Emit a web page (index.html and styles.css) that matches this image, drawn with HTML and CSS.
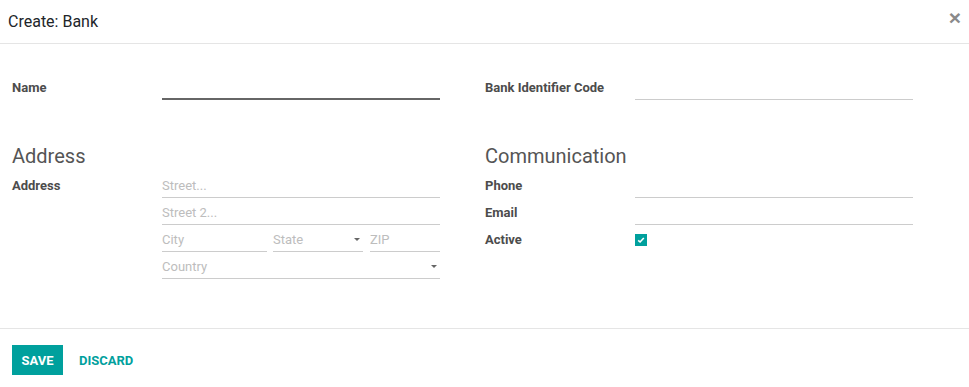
FILE: index.html
```html
<!DOCTYPE html>
<html lang="en">
<head>
    <title>Create: Bank</title>
    <meta name="viewport" content="width=device-width, initial-scale=1.0">
    <link rel="stylesheet" href="styles.css">
</head>
<body>

    <!-- Header -->
    <div class="modal-header">
        <h4 class="modal-title">Create: Bank</h4>
        <button class="close-btn">&times;</button>
    </div>

    <div class="modal-body">
        <div class="form-row top-row">
            <div class="group">
                <label class="field-label">Name</label>
                <input class="field-input name-input" type="text">
            </div>
            <div class="group">
                <label class="field-label">Bank Identifier Code</label>
                <input class="field-input" type="text">
            </div>
        </div>

        <div class="form-row">
            <div class="group">
                <h3 class="group-title">Address</h3>
                <label class="field-label">Address</label>
                <div class="address-fields">
                    <input class="field-input" type="text" placeholder="Street...">
                    <input class="field-input" type="text" placeholder="Street 2...">
                    <div class="address-line">
                        <input class="field-input city" type="text" placeholder="City">
                        <div class="select-input state">State<span class="caret"></span></div>
                        <input class="field-input zip" type="text" placeholder="ZIP">
                    </div>
                    <div class="select-input">Country<span class="caret"></span></div>
                </div>
            </div>
            <div class="group">
                <h3 class="group-title">Communication</h3>
                <label class="field-label">Phone</label>
                <input class="field-input" type="text">
                <label class="field-label">Email</label>
                <input class="field-input" type="text">
                <label class="field-label">Active</label>
                <div class="check-cell">
                    <span class="checkbox">
                        <svg width="8" height="8" viewBox="0 0 8 8"><path d="M1.2 4.3 L3.1 6 L6.8 2" fill="none" stroke="#fff" stroke-width="1.6"/></svg>
                    </span>
                </div>
            </div>
        </div>
    </div>

    <div class="modal-footer">
        <button class="btn-save">Save</button>
        <button class="btn-discard">Discard</button>
    </div>

</body>
</html>
```

FILE: styles.css
```css
body {
    margin: 0;
    background: #fff;
    color: #4c4c4c;
    font-family: Roboto, 'Noto Sans', sans-serif;
    font-size: 13px;
}

/* Header */
.modal-header {
    height: 43px;
    border-bottom: 1px solid #e5e5e5;
    display: flex;
    align-items: center;
    justify-content: space-between;
    padding: 0 8px;
}

.modal-title {
    margin: 0;
    font-size: 16px;
    font-weight: 400;
    color: #212529;
}

.close-btn {
    border: none;
    background: none;
    padding: 0;
    margin-top: -8px;
    font-size: 21px;
    font-weight: bold;
    line-height: 1;
    color: #8a8a8a;
    cursor: pointer;
}

/* Body */
.modal-body {
    padding: 32px 0 49px 12px;
}

.form-row {
    display: flex;
    gap: 45px;
}

.top-row {
    margin-bottom: 43px;
}

.group {
    width: 428px;
    display: grid;
    grid-template-columns: 150px 278px;
    align-content: start;
}

.group-title {
    grid-column: 1 / -1;
    margin: 0 0 2px;
    font-size: 20px;
    line-height: 26px;
    font-weight: 400;
    color: #555;
}

.field-label {
    font-weight: bold;
    line-height: 25px;
    padding-top: 2px;
    color: #4c4c4c;
}

.top-row .field-label {
    line-height: 24px;
    padding-top: 0;
}

.field-input {
    box-sizing: border-box;
    width: 100%;
    height: 27px;
    margin: 0;
    padding: 3px 0 0;
    border: none;
    border-bottom: 1px solid #ccc;
    outline: none;
    background: transparent;
    font-family: inherit;
    font-size: 13px;
    color: #4c4c4c;
}

.top-row .field-input {
    height: 24px;
    padding-top: 0;
}

.top-row .name-input {
    border-bottom: 2px solid #666;
}

.field-input::placeholder {
    color: #bdbdbd;
}

.address-fields {
    display: flex;
    flex-direction: column;
}

.address-line {
    display: flex;
}

.city {
    flex: 0 0 105px;
    width: 105px;
    margin-right: 6px;
}

.state {
    flex: 0 0 90px;
    margin-right: 7px;
}

.zip {
    flex: 1 1 0;
    min-width: 0;
    width: auto;
}

.select-input {
    box-sizing: border-box;
    height: 27px;
    line-height: 26px;
    padding-top: 2px;
    border-bottom: 1px solid #ccc;
    color: #bdbdbd;
    position: relative;
}

.caret {
    position: absolute;
    right: 3px;
    top: 13px;
    border-left: 3px solid transparent;
    border-right: 3px solid transparent;
    border-top: 3px solid #666;
}

.check-cell {
    height: 27px;
    display: flex;
    align-items: center;
}

.checkbox {
    width: 12px;
    height: 12px;
    background: #00a09d;
    display: flex;
    align-items: center;
    justify-content: center;
    margin-top: 3px;
}

/* Footer */
.modal-footer {
    border-top: 1px solid #e5e5e5;
    padding: 16px 12px;
    display: flex;
    align-items: center;
    gap: 4px;
}

.btn-save,
.btn-discard {
    border: none;
    height: 30px;
    font-family: inherit;
    font-size: 13px;
    font-weight: bold;
    text-transform: uppercase;
    cursor: pointer;
}

.btn-save {
    width: 51px;
    background: #00a09d;
    color: #fff;
}

.btn-discard {
    background: none;
    color: #00a09d;
    padding: 0 12px;
}
```
